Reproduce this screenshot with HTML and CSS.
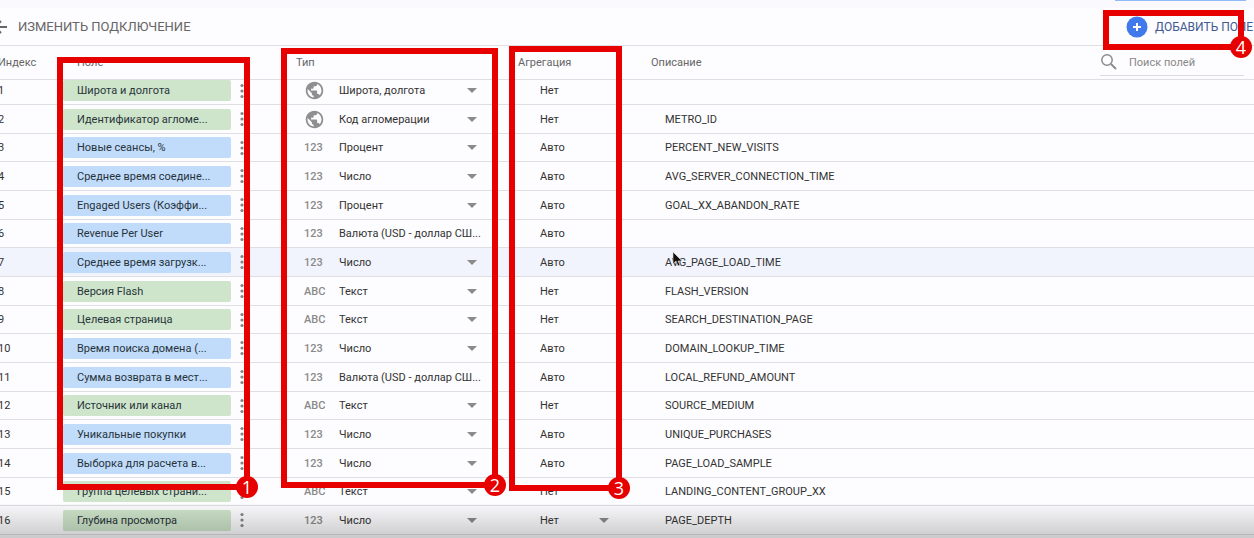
FILE: index.html
```html
<!DOCTYPE html>
<html lang="ru">

<head>
  <meta charset="utf-8">
  <meta name="viewport" content="width=device-width">
  <title>Изменить подключение</title>
  <link rel="stylesheet" href="styles.css">
</head>

<body>
  <div class="topbar">
    <div class="topbar-button"></div>
  </div>
  <header class="header">
    <a class="back" href="#">
      <svg width="16" height="16" viewBox="0 0 16 16">
        <path d="M16 8H3M10 2L4 8l6 6" fill="none" stroke="#666" stroke-width="2" />
      </svg>
      ИЗМЕНИТЬ ПОДКЛЮЧЕНИЕ
    </a>
    <button class="add" type="button">
      <svg width="22" height="22" viewBox="0 0 22 22">
        <circle cx="11" cy="11" r="10.5" fill="#4079ec" />
        <path d="M11 7v8M7 11h8" stroke="#fff" stroke-width="2" />
      </svg>
      ДОБАВИТЬ ПОЛЕ
    </button>
  </header>

  <table class="fields">
    <colgroup>
      <col class="col-index">
      <col class="col-field">
      <col class="col-type">
      <col class="col-agg">
      <col>
    </colgroup>
    <thead>
      <tr>
        <th>Индекс</th>
        <th class="th-field">Поле</th>
        <th>Тип</th>
        <th>Агрегация</th>
        <th>
          <div class="th-last">
            <span>Описание</span>
            <label class="search">
              <svg width="18" height="18" viewBox="0 0 18 18">
                <circle cx="7" cy="7" r="5.2" fill="none" stroke="#8c8c8c" stroke-width="1.5" />
                <path d="M11 11l5 5" stroke="#8c8c8c" stroke-width="2" />
              </svg>
              <input type="text" placeholder="Поиск полей" aria-label="Поиск полей">
            </label>
          </div>
        </th>
      </tr>
    </thead>
    <tbody id="rows"></tbody>
  </table>

  <div class="shade"></div>

  <svg class="cursor" width="11" height="16" viewBox="0 0 11 16">
    <path d="M1 1v12l3-3 2 5 2-1-2-4h4z" fill="#111" stroke="#ddd" stroke-width="0.6" />
  </svg>

  <div class="mark mark-field"><span class="badge">1</span></div>
  <div class="mark mark-type"><span class="badge">2</span></div>
  <div class="mark mark-agg"><span class="badge">3</span></div>
  <div class="mark mark-add"><span class="badge">4</span></div>

  <script>
    // name, kind of field, icon, type, aggregation, description
    const fields = [
      ["Широта и долгота", "dim", "geo", "Широта, долгота", "Нет", ""],
      ["Идентификатор агломе...", "dim", "geo", "Код агломерации", "Нет", "METRO_ID"],
      ["Новые сеансы, %", "metric", "123", "Процент", "Авто", "PERCENT_NEW_VISITS"],
      ["Среднее время соедине...", "metric", "123", "Число", "Авто", "AVG_SERVER_CONNECTION_TIME"],
      ["Engaged Users (Коэффи...", "metric", "123", "Процент", "Авто", "GOAL_XX_ABANDON_RATE"],
      ["Revenue Per User", "metric", "123", "Валюта (USD - доллар СШ...", "Авто", ""],
      ["Среднее время загрузк...", "metric", "123", "Число", "Авто", "AVG_PAGE_LOAD_TIME"],
      ["Версия Flash", "dim", "ABC", "Текст", "Нет", "FLASH_VERSION"],
      ["Целевая страница", "dim", "ABC", "Текст", "Нет", "SEARCH_DESTINATION_PAGE"],
      ["Время поиска домена (...", "metric", "123", "Число", "Авто", "DOMAIN_LOOKUP_TIME"],
      ["Сумма возврата в мест...", "metric", "123", "Валюта (USD - доллар СШ...", "Авто", "LOCAL_REFUND_AMOUNT"],
      ["Источник или канал", "dim", "ABC", "Текст", "Нет", "SOURCE_MEDIUM"],
      ["Уникальные покупки", "metric", "123", "Число", "Авто", "UNIQUE_PURCHASES"],
      ["Выборка для расчета в...", "metric", "123", "Число", "Авто", "PAGE_LOAD_SAMPLE"],
      ["Группа целевых страни...", "dim", "ABC", "Текст", "Нет", "LANDING_CONTENT_GROUP_XX"],
      ["Глубина просмотра", "dim", "123", "Число", "Нет", "PAGE_DEPTH"]
    ];

    const globe = `<svg width="21" height="21" viewBox="0 0 24 24"><path fill="#8f8f8f" d="M12 2C6.48 2 2 6.48 2 12s4.48 10 10 10 10-4.48 10-10S17.52 2 12 2zm-1 17.93c-3.95-.49-7-3.85-7-7.93 0-.62.08-1.21.21-1.79L9 15v1c0 1.1.9 2 2 2v1.93zm6.9-2.54c-.26-.81-1-1.39-1.9-1.39h-1v-3c0-.55-.45-1-1-1H8v-2h2c.55 0 1-.45 1-1V7h2c1.1 0 2-.9 2-2v-.41c2.93 1.19 5 4.06 5 7.41 0 2.08-.8 3.97-2.1 5.39z"/></svg>`;
    const dots = `<svg width="4" height="16" viewBox="0 0 4 16" fill="#858585"><circle cx="2" cy="2.5" r="1.6"/><circle cx="2" cy="8" r="1.6"/><circle cx="2" cy="13.5" r="1.6"/></svg>`;

    function dropdown(value, label, caret) {
      return `<span class="select ${caret ? "caret" : ""}"><select aria-label="${label}"><option>${value}</option></select></span>`;
    }

    document.getElementById("rows").innerHTML = fields.map(([name, kind, icon, type, agg, desc], i) => `
      <tr class="${i === 6 ? "active" : ""}">
        <td>${i + 1}</td>
        <td>
          <div class="field">
            <span class="chip ${kind}">${name}</span>
            <button class="more" type="button" aria-label="Ещё">${dots}</button>
          </div>
        </td>
        <td>
          <div class="type">
            <span class="icon">${icon === "geo" ? globe : icon}</span>
            ${dropdown(type, "Тип", !type.endsWith("..."))}
          </div>
        </td>
        <td class="agg">${agg === "Нет" ? dropdown(agg, "Агрегация", i === fields.length - 1) : agg}</td>
        <td class="desc">${desc}</td>
      </tr>`).join("");
  </script>
</body>

</html>
```
FILE: styles.css
```css
* {
  box-sizing: border-box;
}

body {
  margin: 0;
  height: 100vh;
  position: relative;
  overflow: hidden;
  background-color: #fdfcfe;
  font-family: Roboto, "Liberation Sans", sans-serif;
  font-size: 11px;
  color: #333;
}

button,
input,
select {
  margin: 0;
  padding: 0;
  border: none;
  background: none;
  font: inherit;
  color: inherit;
}

svg {
  display: block;
  flex-shrink: 0;
}

/* Header */
.topbar {
  display: flex;
  justify-content: flex-end;
  height: 8px;
  padding-right: 8px;
  background-color: #f9f9fe;
}

.topbar-button {
  width: 131px;
  height: 1px;
  background-color: #8fb9f7;
}

.header {
  display: flex;
  justify-content: space-between;
  align-items: center;
  height: 38px;
  border-bottom: 1px solid #dfdfe3;
  font-size: 13px;
  white-space: nowrap;
}

.back {
  display: flex;
  align-items: center;
  gap: 11px;
  margin-left: -9px;
  color: #666;
  text-decoration: none;
}

.add {
  display: flex;
  align-items: center;
  gap: 7px;
  width: 128px;
  font-size: 12px;
  color: #3f5a95;
  cursor: pointer;
}

/* Table */
.fields {
  width: calc(100% + 2px);
  margin-left: -2px;
  border-collapse: separate;
  border-spacing: 0;
  table-layout: fixed;
}

.col-index {
  width: 65px;
}

.col-field {
  width: 233px;
}

.col-type {
  width: 222px;
}

.col-agg {
  width: 133px;
}

th,
td {
  padding: 0;
  border-bottom: 1px solid #dfdfe3;
  text-align: left;
  white-space: nowrap;
}

th {
  height: 34px;
  font-weight: 400;
  color: #666;
}

.th-field {
  padding-left: 14px;
}

.th-last {
  display: flex;
  justify-content: space-between;
  align-items: center;
  padding-right: 10px;
}

.search {
  display: flex;
  align-items: center;
  gap: 11px;
  width: 144px;
  height: 27px;
  border-bottom: 1px solid #dcdce0;
}

.search input {
  width: 100%;
  outline: none;
}

.search input::placeholder {
  color: #888;
}

td {
  height: 29px;
}

tr:nth-child(3n) td {
  height: 28px;
}

/* the first row is partly scrolled under the header */
tbody tr:first-child td {
  height: 25px;
  padding-bottom: 3px;
}

.active td {
  background-color: #f2f4fd;
}

.field,
.type {
  display: flex;
  align-items: center;
}

.chip {
  width: 168px;
  height: 21px;
  padding-left: 14px;
  border-radius: 2px;
  line-height: 21px;
  color: #27343a;
}

.dim {
  background-color: #cfe5cb;
}

.metric {
  background-color: #c1dbfb;
}

.more {
  margin-left: 9px;
  cursor: pointer;
}

.icon {
  width: 35px;
  margin-left: 8px;
  font-weight: 500;
  color: #8a8a8a;
}

.select {
  display: inline-flex;
  align-items: center;
  width: 148px;
}

.select select {
  flex: 1;
  min-width: 0;
  appearance: none;
}

.caret::after {
  content: "";
  margin-right: 10px;
  border: 5px solid transparent;
  border-top-color: #8a8a8a;
  border-bottom: none;
}

.agg {
  padding-left: 22px;
}

.agg .select {
  width: 79px;
}

.desc {
  padding-left: 14px;
}

/* Things lying over the page */
.shade {
  position: absolute;
  left: 0;
  right: 0;
  bottom: 0;
  height: 34px;
  background: linear-gradient(rgba(0, 0, 0, 0.02), rgba(0, 0, 0, 0.2));
  pointer-events: none;
}

.cursor {
  position: absolute;
  left: 672px;
  top: 251px;
}

.mark {
  position: absolute;
  border: 6px solid #e60000;
  pointer-events: none;
}

.mark-field {
  left: 57px;
  top: 57px;
  width: 193px;
  height: 433px;
}

.mark-type {
  left: 281px;
  top: 48px;
  width: 217px;
  height: 440px;
}

.mark-agg {
  left: 509px;
  top: 46px;
  width: 113px;
  height: 445px;
}

.mark-add {
  right: 10px;
  top: 10px;
  width: 141px;
  height: 40px;
}

.badge {
  position: absolute;
  right: -14px;
  bottom: -14px;
  width: 22px;
  height: 22px;
  border-radius: 50%;
  background-color: #e60000;
  color: #fff;
  font-family: "Open Sans", sans-serif;
  font-size: 18px;
  line-height: 22px;
  text-align: center;
}
```
